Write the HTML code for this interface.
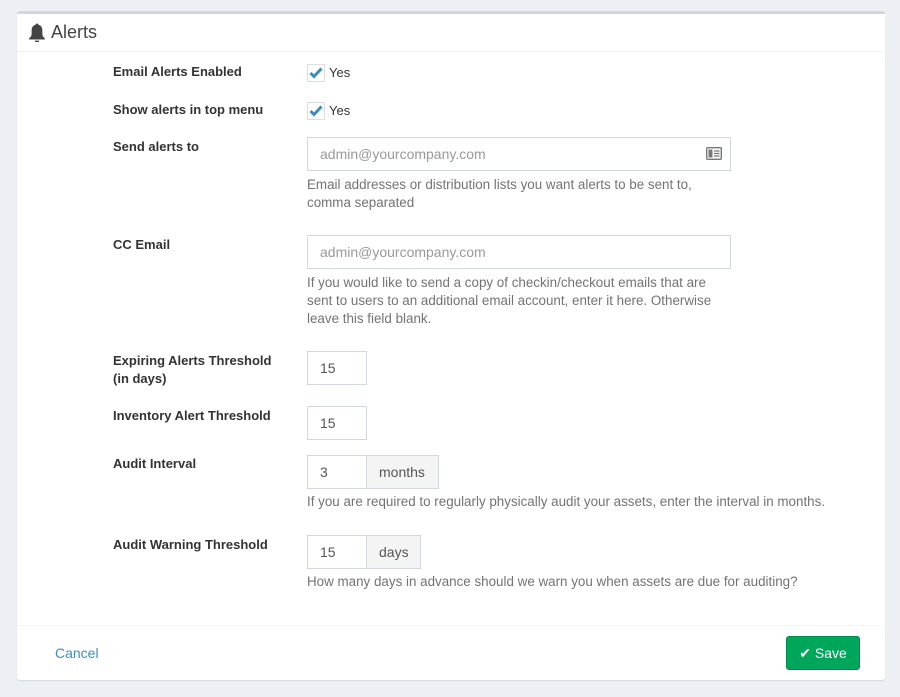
<!DOCTYPE html>
<html><head><style>
*{box-sizing:border-box;margin:0;padding:0}
body{width:900px;height:697px;background:#ecf0f5;font-family:"Liberation Sans",sans-serif;color:#333;position:relative;overflow:hidden}
.panel{position:absolute;left:17px;top:11px;width:868px;height:669px;background:#fff;border-top:3px solid #d2d6de;border-radius:3px;box-shadow:0 1px 1px rgba(0,0,0,.1)}
.a{position:absolute}
.lbl{font-weight:bold;font-size:13px;color:#333;line-height:18px}
.help{font-size:13.4px;color:#737373;line-height:18px}
.inp{border:1px solid #d2d6de;height:34px;background:#fff;font-size:14px;color:#555;padding:8px 12px;line-height:16px}
.ph{color:#999}
.add{background:#f4f4f4;border:1px solid #d2d6de;height:34px;font-size:14px;color:#555;padding:8px 12px;line-height:16px}
.cb{width:18px;height:18px;border:1px solid #ddd;background:#fff}
.yes{font-size:13px;color:#333}
</style></head><body>
<div class="panel">
 <div class="a" style="left:0;top:0;width:868px;height:38px;border-bottom:1px solid #f4f4f4"></div>
 <svg class="a" style="left:11px;top:9px" width="18" height="19" viewBox="0 0 16 17"><path d="M8 0.5c.8 0 1.2.5 1.2 1.1 2.3.5 3.6 2.4 3.6 4.9v3.5c0 1.5.8 2.6 2.2 3.6v1.2H1v-1.2c1.4-1 2.2-2.1 2.2-3.6V6.5c0-2.5 1.3-4.4 3.6-4.9C6.8 1 7.2.5 8 .5zM6 15.8h4c0 1-.9 1.7-2 1.7s-2-.7-2-1.7z" fill="#444"/></svg>
 <div class="a" style="left:34px;top:8px;font-size:18px;color:#444">Alerts</div>
 <div class="a" style="left:0;top:611px;width:868px;height:1px;background:#f4f4f4"></div>
</div>
<div class="a lbl" style="left:113px;top:63px">Email Alerts Enabled</div>
<div class="a cb" style="left:307px;top:64px"></div>
<svg class="a" style="left:309px;top:66px" width="14" height="14" viewBox="0 0 14 14"><path d="M1.5 7l3.5 3.5L12.5 2.5" stroke="#3c8dbc" stroke-width="3" fill="none"/></svg>
<div class="a yes" style="left:329px;top:65px">Yes</div>
<div class="a lbl" style="left:113px;top:101px">Show alerts in top menu</div>
<div class="a cb" style="left:307px;top:102px"></div>
<svg class="a" style="left:309px;top:104px" width="14" height="14" viewBox="0 0 14 14"><path d="M1.5 7l3.5 3.5L12.5 2.5" stroke="#3c8dbc" stroke-width="3" fill="none"/></svg>
<div class="a yes" style="left:329px;top:103px">Yes</div>
<div class="a lbl" style="left:113px;top:138px">Send alerts to</div>
<div class="a inp ph" style="left:307px;top:137px;width:424px">admin@yourcompany.com</div>
<svg class="a" style="left:706px;top:147px" width="16" height="13" viewBox="0 0 16 13"><rect x="0.7" y="0.7" width="14.6" height="11.6" rx="1" fill="none" stroke="#777" stroke-width="1.4"/><rect x="2.5" y="2.5" width="4" height="8" fill="#777"/><path d="M8 4h5.5M8 6.5h5.5M8 9h5.5" stroke="#777" stroke-width="1.3"/></svg>
<div class="a help" style="left:307px;top:176px;width:405px">Email addresses or distribution lists you want alerts to be sent to, comma separated</div>
<div class="a lbl" style="left:113px;top:236px">CC Email</div>
<div class="a inp ph" style="left:307px;top:235px;width:424px">admin@yourcompany.com</div>
<div class="a help" style="left:307px;top:274px;width:424px">If you would like to send a copy of checkin/checkout emails that are sent to users to an additional email account, enter it here. Otherwise leave this field blank.</div>
<div class="a lbl" style="left:113px;top:352px;width:170px">Expiring Alerts Threshold (in days)</div>
<div class="a inp" style="left:307px;top:351px;width:60px">15</div>
<div class="a lbl" style="left:113px;top:407px">Inventory Alert Threshold</div>
<div class="a inp" style="left:307px;top:406px;width:60px">15</div>
<div class="a lbl" style="left:113px;top:455px">Audit Interval</div>
<div class="a inp" style="left:307px;top:455px;width:60px">3</div>
<div class="a add" style="left:366px;top:455px;width:73px">months</div>
<div class="a help" style="left:307px;top:493px">If you are required to regularly physically audit your assets, enter the interval in months.</div>
<div class="a lbl" style="left:113px;top:536px">Audit Warning Threshold</div>
<div class="a inp" style="left:307px;top:535px;width:60px">15</div>
<div class="a add" style="left:366px;top:535px;width:55px">days</div>
<div class="a help" style="left:307px;top:573px">How many days in advance should we warn you when assets are due for auditing?</div>
<div class="a" style="left:55px;top:645px;font-size:14px;color:#3c8dbc">Cancel</div>
<div class="a" style="left:786px;top:636px;width:74px;height:34px;background:#00a65a;border:1px solid #008d4c;border-radius:3px;color:#fff;font-size:14px;line-height:32px;text-align:center">✔ Save</div>
</body></html>
